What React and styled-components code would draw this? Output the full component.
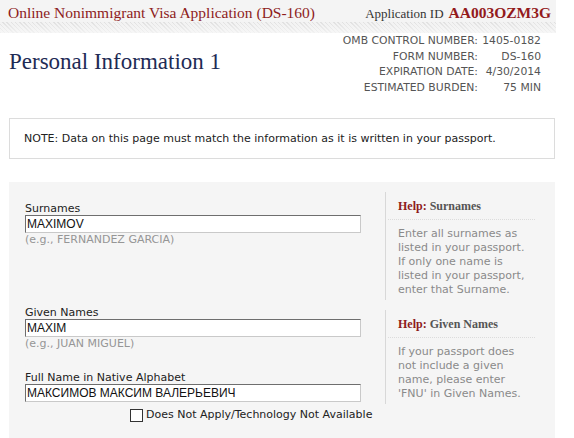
import React from "react";
import styled, { createGlobalStyle } from "styled-components";

const Global = createGlobalStyle`
  html, body { margin: 0; padding: 0; background: #fff; }
  body { font-family: "DejaVu Sans", Verdana, sans-serif; color: #222; }
  * { box-sizing: border-box; }
`;

const Page = styled.div`
  width: 574px;
  height: 438px;
  overflow: hidden;
`;

const TopBar = styled.header`
  width: 556px;
  height: 33px;
  padding: 0 5px 0 8px;
  display: flex;
  justify-content: space-between;
  align-items: flex-start;
  background:
    linear-gradient(to bottom, rgba(244, 244, 244, 0), rgba(248, 248, 248, 0.75)) 0 22px / 100% 11px no-repeat,
    repeating-linear-gradient(45deg, #e0e0e0 0 1px, #f2f2f2 1px 3px) 0 22px / 100% 11px no-repeat,
    #f4f4f4;
`;

const AppTitle = styled.div`
  margin-top: 5px;
  font-family: "Liberation Serif", "Times New Roman", serif;
  font-size: 15.5px;
  line-height: 15.5px;
  color: #8e1c1c;
`;

const AppId = styled.div`
  margin-top: 5px;
  font-family: "Liberation Serif", "Times New Roman", serif;
  font-size: 15.5px;
  line-height: 15.5px;
  color: #333;
  white-space: nowrap;
`;

const AppIdLabel = styled.span`
  font-size: 13px;
  margin-right: 5px;
`;

const AppIdValue = styled.b`
  color: #931a1c;
  font-weight: bold;
`;

const Main = styled.main`
  width: 555px;
  padding-left: 9px;
`;

const SubHeader = styled.div`
  display: flex;
  justify-content: space-between;
  align-items: flex-start;
  padding-right: 14px;
`;

const PageTitle = styled.h1`
  margin: 16px 0 0;
  font-family: "Liberation Serif", "Times New Roman", serif;
  font-weight: normal;
  font-size: 23px;
  line-height: 26px;
  color: #1e2b55;
`;

const Omb = styled.dl`
  margin: 0;
  display: grid;
  grid-template-columns: auto 60px;
  column-gap: 3px;
  font-size: 10.8px;
  line-height: 15.5px;
  color: #555;
  text-align: right;
  white-space: nowrap;
`;

const OmbTerm = styled.dt`
  margin: 0;
`;

const OmbValue = styled.dd`
  margin: 0;
`;

const NoteBox = styled.div`
  margin-top: 23px;
  height: 41px;
  border: 1px solid #dcdcdc;
  padding: 12px 14px;
  font-size: 11px;
  line-height: 15px;
  color: #222;
  white-space: nowrap;
`;

const Panel = styled.section`
  margin-top: 23px;
  height: 260px;
  background: #f5f5f5;
  padding-left: 16px;
`;

const Section = styled.div`
  display: grid;
  grid-template-columns: 360px 155px;
  align-items: start;
`;

const Fields = styled.div`
  padding-top: ${(p) => p.$lead}px;
  display: flex;
  flex-direction: column;
  gap: 21px;
`;

const FieldGroup = styled.div`
  display: flex;
  flex-direction: column;
`;

const Label = styled.label`
  font-size: 11px;
  line-height: 12px;
  color: #222;
`;

const TextInput = styled.input`
  width: 336px;
  height: 18px;
  margin: 0;
  padding: 0 1px;
  border-style: solid;
  border-width: 1px;
  border-color: #6e6e6e #c9c9c9 #c9c9c9 #6e6e6e;
  background: #fff;
  font-family: "Liberation Sans", Arial, sans-serif;
  font-size: 12px;
  color: #111;
  outline: none;
`;

const Hint = styled.div`
  font-size: 11px;
  line-height: 14px;
  color: #969696;
`;

const CheckRow = styled.label`
  margin-top: 6px;
  padding-left: 105px;
  display: flex;
  align-items: center;
  gap: 3px;
  font-size: 11px;
  line-height: 14px;
  color: #222;
  white-space: nowrap;
`;

const Check = styled.input`
  appearance: none;
  -webkit-appearance: none;
  margin: 0;
  width: 13px;
  height: 13px;
  border: 1px solid #333;
  background: #fff;
`;

const HelpBox = styled.aside`
  margin-top: 10px;
  border-left: 1px solid #d8d8d8;
  padding-left: 2px;
`;

const HelpTitle = styled.div`
  margin-right: 5px;
  padding: 7px 0 6px 10px;
  border-bottom: 1px dotted #dcdcdc;
  font-family: "Liberation Serif", "Times New Roman", serif;
  font-weight: bold;
  font-size: 12px;
  line-height: 14px;
  color: #555;
`;

const HelpWord = styled.span`
  color: #8e1c1c;
`;

const HelpText = styled.p`
  margin: 0;
  padding: 7px 0 3px 10px;
  font-size: 11px;
  line-height: 14px;
  color: #8a8a8a;
  white-space: nowrap;
`;

const Field = ({ label, value, hint }) => (
  <FieldGroup>
    <Label>{label}</Label>
    <TextInput readOnly value={value} />
    {hint && <Hint>{hint}</Hint>}
  </FieldGroup>
);

const Help = ({ title, lines }) => (
  <HelpBox>
    <HelpTitle>
      <HelpWord>Help:</HelpWord> {title}
    </HelpTitle>
    <HelpText>
      {lines.map((l, i) => (
        <React.Fragment key={i}>
          {l}
          {i < lines.length - 1 && <br />}
        </React.Fragment>
      ))}
    </HelpText>
  </HelpBox>
);

export default function App() {
  return (
    <Page>
      <Global />
      <TopBar>
        <AppTitle>Online Nonimmigrant Visa Application (DS-160)</AppTitle>
        <AppId>
          <AppIdLabel>Application ID</AppIdLabel>
          <AppIdValue>AA003OZM3G</AppIdValue>
        </AppId>
      </TopBar>
      <Main>
        <SubHeader>
          <PageTitle>Personal Information 1</PageTitle>
          <Omb>
            <OmbTerm>OMB CONTROL NUMBER:</OmbTerm>
            <OmbValue>1405-0182</OmbValue>
            <OmbTerm>FORM NUMBER:</OmbTerm>
            <OmbValue>DS-160</OmbValue>
            <OmbTerm>EXPIRATION DATE:</OmbTerm>
            <OmbValue>4/30/2014</OmbValue>
            <OmbTerm>ESTIMATED BURDEN:</OmbTerm>
            <OmbValue>75 MIN</OmbValue>
          </Omb>
        </SubHeader>
        <NoteBox>
          NOTE: Data on this page must match the information as it is written in your passport.
        </NoteBox>
        <Panel>
          <Section>
            <Fields $lead={21}>
              <Field label="Surnames" value="MAXIMOV" hint="(e.g., FERNANDEZ GARCIA)" />
            </Fields>
            <Help
              title="Surnames"
              lines={[
                "Enter all surnames as",
                "listed in your passport.",
                "If only one name is",
                "listed in your passport,",
                "enter that Surname.",
              ]}
            />
          </Section>
          <Section>
            <Fields $lead={7}>
              <Field label="Given Names" value="MAXIM" hint="(e.g., JUAN MIGUEL)" />
              <FieldGroup>
                <Label>Full Name in Native Alphabet</Label>
                <TextInput readOnly value="МАКСИМОВ МАКСИМ ВАЛЕРЬЕВИЧ" />
                <CheckRow>
                  <Check type="checkbox" readOnly />
                  Does Not Apply/Technology Not Available
                </CheckRow>
              </FieldGroup>
            </Fields>
            <Help
              title="Given Names"
              lines={[
                "If your passport does",
                "not include a given",
                "name, please enter",
                "'FNU' in Given Names.",
              ]}
            />
          </Section>
        </Panel>
      </Main>
    </Page>
  );
}
